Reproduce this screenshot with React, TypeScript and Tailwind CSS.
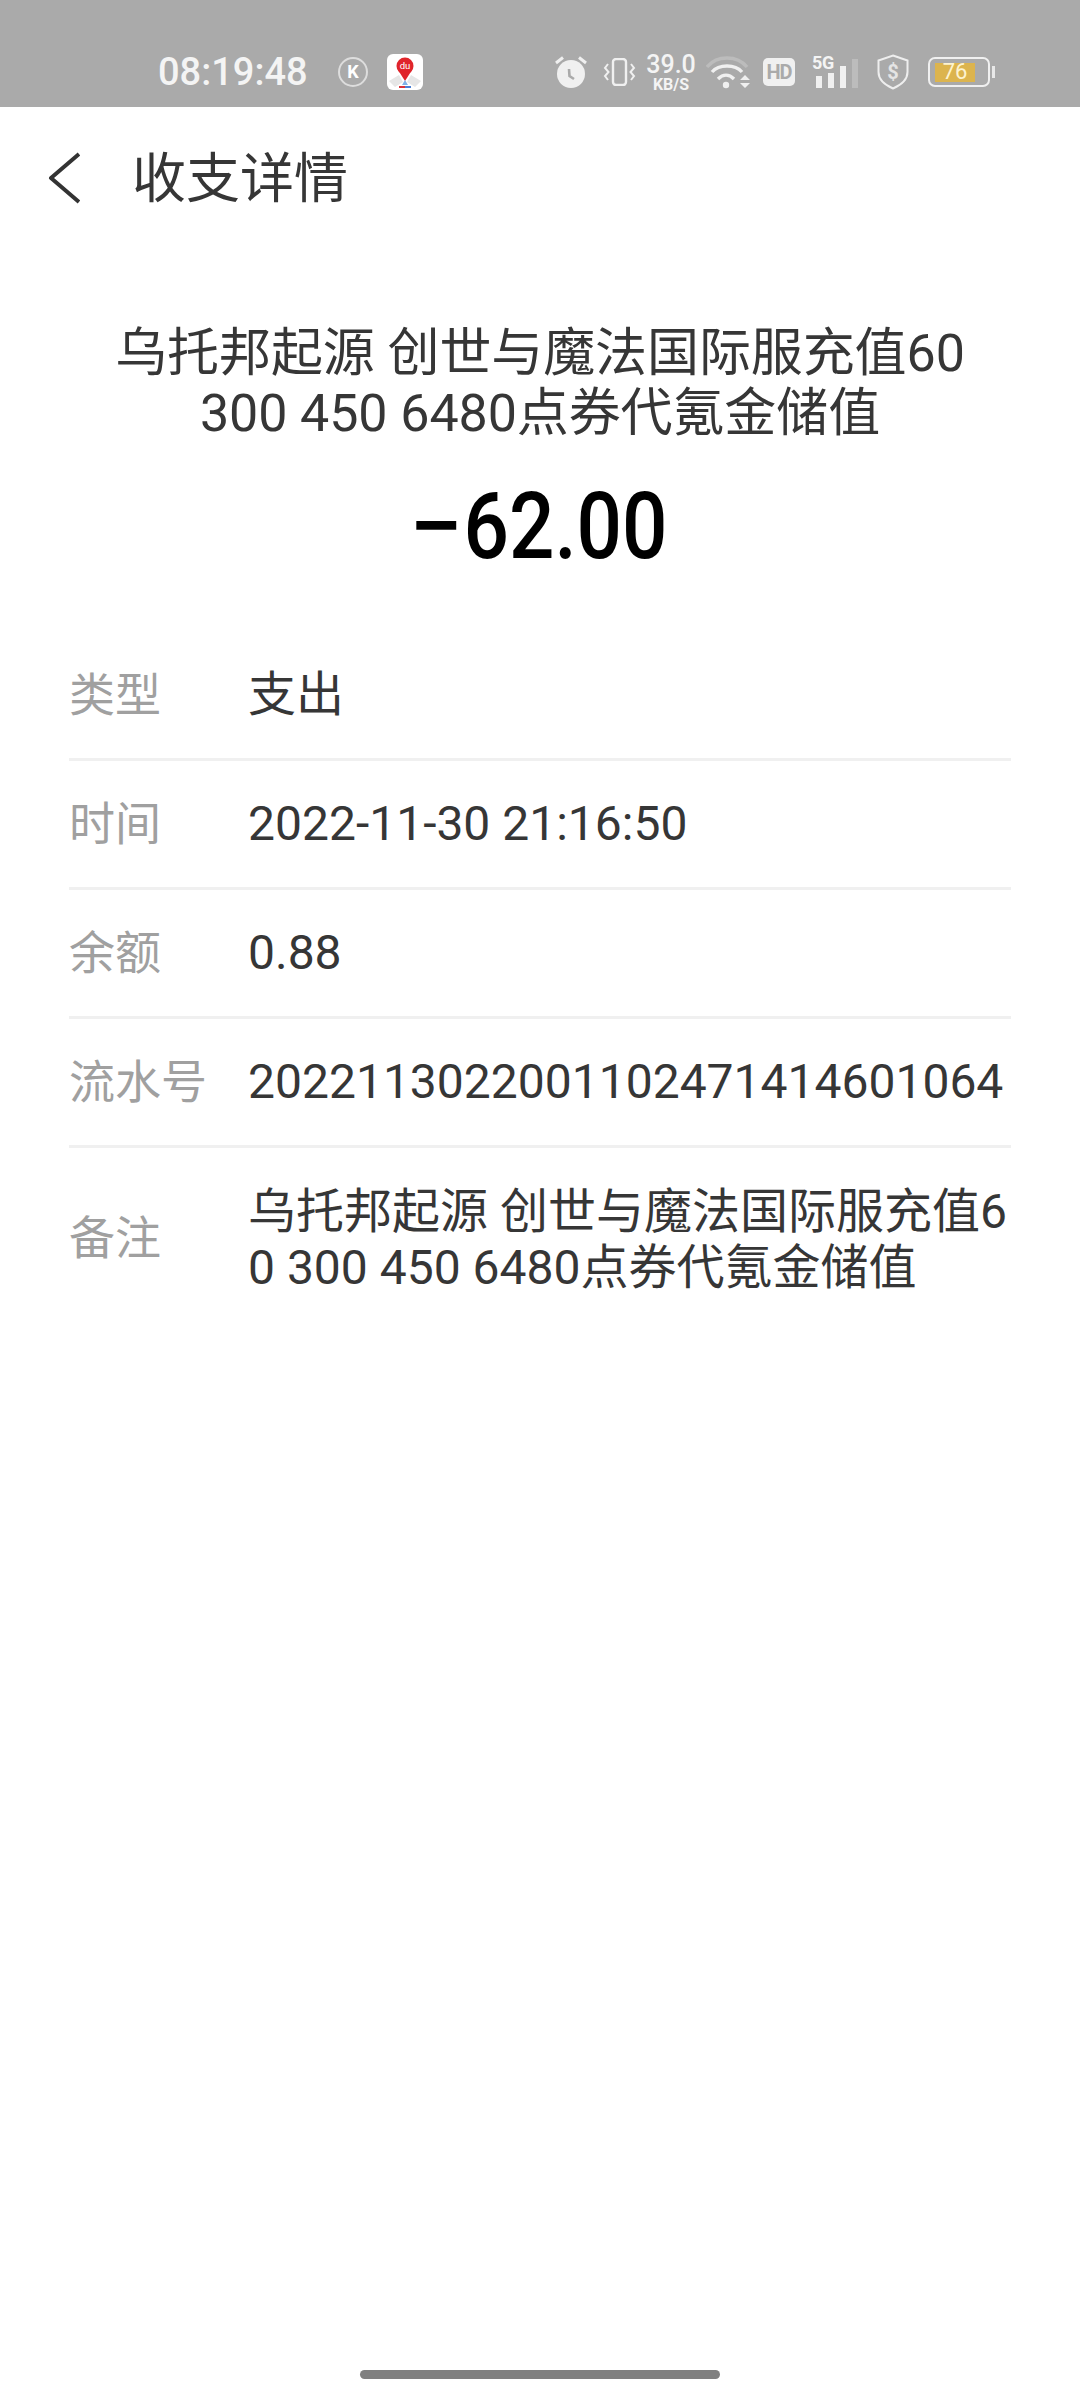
const FONT = "font-['Roboto','Noto_Sans_CJK_SC',sans-serif]";

function Row({ label, value, tall }: { label: string; value: string; tall?: boolean }) {
  return (
    <div className={`flex items-center ${tall ? "py-[36px]" : "h-[129px] border-b-[3px] border-[#f0f0f0]"}`}>
      <div className={`w-[179px] shrink-0 text-[46px] text-[#a0a0a0] ${tall ? "-mt-[4px]" : ""}`}>{label}</div>
      <div className="min-w-0 flex-1 text-[48px] leading-[56px] break-all text-[#363636]">{value}</div>
    </div>
  );
}

function StatusBar() {
  return (
    <div className="flex h-[107px] items-center bg-[#aaaaaa] pt-[37px] pl-[158px] text-white">
      <span className="w-[180px] text-[38px] leading-[40px] font-medium text-[#f4f4f4]">08:19:48</span>
      <div className="flex h-[30px] w-[30px] items-center justify-center rounded-full border-2 border-[#dddddd] text-[18px] leading-none font-bold">K</div>
      {/* map app icon */}
      <svg viewBox="0 0 36 36" className="ml-[19px] h-[36px] w-[36px]">
        <rect width="36" height="36" rx="6" fill="#fff" />
        <path d="M2 27 L12 21 L16 28 L8 33Z M34 27 L24 21 L20 28 L28 33Z" fill="#e6e6e6" />
        <circle cx="18" cy="12" r="8.5" fill="#e0252b" />
        <path d="M11 16 L18 27 L25 16Z" fill="#e0252b" />
        <text x="18" y="15" fontSize="9.5" textAnchor="middle" fill="#fff" fontFamily="Roboto">du</text>
        <path d="M15 31 L18 26 L21 31Z" fill="#7fb2e8" />
        <rect x="12" y="32" width="6" height="2" fill="#d8333a" />
        <rect x="18" y="32" width="6" height="2" fill="#4a7fd4" />
      </svg>
      {/* alarm */}
      <svg viewBox="0 0 32 32" className="ml-[132px] h-[32px] w-[32px]" fill="#f0f0f0">
        <circle cx="16" cy="18" r="14" />
        <path d="M1 7 L8 1.5M31 7 L24 1.5" stroke="#f0f0f0" strokeWidth="3" />
        <path d="M14 13 L14.5 20 L19 23" stroke="#aaaaaa" strokeWidth="2.6" fill="none" />
      </svg>
      {/* vibrate */}
      <svg viewBox="0 0 33 28" fill="none" stroke="#f0f0f0" className="ml-[16px] h-[28px] w-[33px]">
        <rect x="10" y="1" width="13" height="26" rx="3" strokeWidth="2.4" />
        <path d="M5 6 L2 10 L5.5 14 L2 18 L5 22M28 6 L31 10 L27.5 14 L31 18 L28 22" strokeWidth="2" />
      </svg>
      <div className="ml-[11px] flex w-[48px] flex-col items-center text-[#f4f4f4]">
        <span className="text-[25px] leading-[25px] font-medium">39.0</span>
        <span className="text-[16px] leading-[16px] font-bold">KB/S</span>
      </div>
      {/* wifi */}
      <svg viewBox="0 0 46 33" fill="none" className="ml-[11px] h-[33px] w-[46px]" stroke="#f0f0f0" strokeWidth="3.4">
        <path d="M1 11 C11 -1 31 -1 41 11" stroke="#bcbcbc" />
        <path d="M6 16 C13 8 29 8 36 16" />
        <path d="M12 23 C17 18 23 18 28 23" />
        <circle cx="20" cy="29" r="3.2" fill="#f0f0f0" stroke="none" />
        <path d="M34 24 L39 19 L44 24Z M34 27 L39 32 L44 27Z" fill="#f0f0f0" stroke="none" />
      </svg>
      <div className="ml-[11px] flex h-[28px] w-[32px] items-center justify-center rounded-[5px] bg-[#f0f0f0] text-[20px] leading-none font-bold tracking-tighter text-[#aaaaaa]">HD</div>
      {/* 5G bars */}
      <div className="relative ml-[17px] flex h-[32px] w-[46px] items-end gap-[6px] pl-[4px]">
        <span className="absolute -top-[2px] left-0 text-[18px] leading-[17px] font-bold tracking-tight text-[#f4f4f4]">5G</span>
        <div className="h-[12px] w-[6px] bg-[#f0f0f0]" />
        <div className="h-[15px] w-[6px] bg-[#f0f0f0]" />
        <div className="h-[22px] w-[6px] bg-[#f0f0f0]" />
        <div className="h-[29px] w-[6px] bg-[#bcbcbc]" />
      </div>
      {/* shield */}
      <svg viewBox="0 0 32 36" fill="none" className="ml-[19px] h-[36px] w-[32px]">
        <path d="M16 1.5 L30.5 6.5 V18 C30.5 26 24 31 16 34.5 C8 31 1.5 26 1.5 18 V6.5Z" stroke="#eeeeee" strokeWidth="2" />
        <text x="16" y="25" fontSize="20" fontWeight="700" textAnchor="middle" fill="#e4e4e4" fontFamily="Roboto">$</text>
      </svg>
      {/* battery */}
      <div className="ml-[19px] flex items-center">
        <div className="flex h-[30px] w-[62px] items-center rounded-[7px] border-2 border-[#f0f0f0] px-[5px]">
          <div className="flex h-[19px] w-[40px] items-center justify-center bg-[#dcb44e] text-[22px] leading-none text-[#fdf3d0]">76</div>
        </div>
        <div className="ml-[2px] h-[12px] w-[3px] bg-[#e8e8e8]" />
      </div>
    </div>
  );
}

export default function App() {
  return (
    <div className={`flex h-[2400px] w-[1080px] flex-col bg-white ${FONT}`}>
      <StatusBar />
      <div className="flex h-[142px] items-center pl-[48px]">
        <svg viewBox="0 0 32 52" fill="none" className="h-[52px] w-[32px]">
          <path d="M31 2 L3 26 L31 50" stroke="#333333" strokeWidth="4" strokeLinejoin="round" />
        </svg>
        <h1 className="ml-[52px] pt-[2px] text-[54px] text-[#363636]">收支详情</h1>
      </div>
      <div className="px-[69px]">
        <p className="mt-[75px] px-[40px] text-center text-[52px] leading-[60px] tracking-[-0.1px] text-[#363636]">
          乌托邦起源 创世与魔法国际服充值60 300 450 6480点券代氪金储值
        </p>
        <p className="mt-[32px] scale-y-[1.17] pl-[6px] text-center text-[80px] leading-[100px] font-medium text-black">
          <span className="inline-block origin-right scale-x-[1.2]">−</span>62.00
        </p>
        <div className="mt-[56px]">
          <Row label="类型" value="支出" />
          <Row label="时间" value="2022-11-30 21:16:50" />
          <Row label="余额" value="0.88" />
          <Row label="流水号" value="2022113022001102471414601064" />
          <Row label="备注" value="乌托邦起源 创世与魔法国际服充值60 300 450 6480点券代氪金储值" tall />
        </div>
      </div>
      <div className="mt-auto mb-[21px] h-[9px] w-[360px] self-center rounded-full bg-[#808080]" />
    </div>
  );
}
